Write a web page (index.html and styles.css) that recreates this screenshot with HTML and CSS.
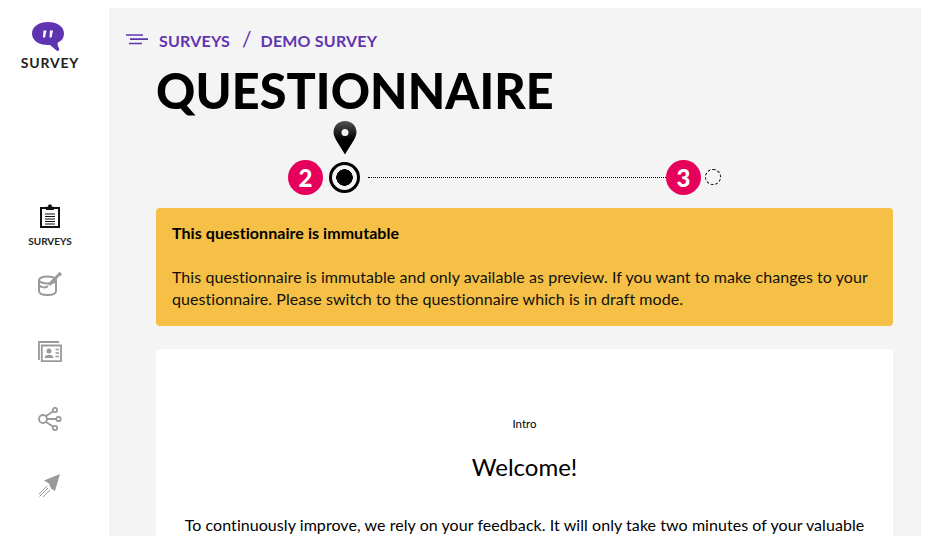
FILE: index.html
```html
<!DOCTYPE html>
<html lang="en">
  <head>
    <meta charset="UTF-8" />
    <title>Questionnaire</title>
    <link rel="stylesheet" href="styles.css">
  </head>
  <body>
    <div class="layout">
      <aside class="sidebar">
        <div class="logo">
          <svg class="logo-icon" width="33" height="30" viewBox="0 0 33 30">
            <path fill="#5f34b0" d="M16 0C25 0 32 4.500 32 11.500C32 16 29.500 19 26 20.500C25 21.500 26 24.500 27 26.500C27.800 28.500 26 29.500 24.500 28.500L18 23C8 23.800 0 19 0 11.500C0 4.500 7 0 16 0Z" />
            <path fill="#fff" d="M11.500 8.500H14.500L13 15.500H11ZM18 8.500H21L19.500 15.500H17.500Z" />
          </svg>
          <div class="logo-text">SURVEY</div>
        </div>

        <nav class="nav">
          <a class="nav-item active">
            <svg width="24" height="24" viewBox="0 0 24 24" fill="none" stroke="#111">
              <path stroke-width="2" d="M8 4H3V23H21V4H16" />
              <path fill="#111" stroke="none" d="M8 6V2.700H10C10.300 -.5 13.700 -.5 14 2.700H16V6Z" />
              <path stroke-width="1.100" d="M7 10H17M7 12.500H17M7 15H17M7 17.500H17M7 20H17" />
            </svg>
            <span>SURVEYS</span>
          </a>
          <a class="nav-item">
            <svg width="24" height="24" viewBox="0 0 24 24" fill="none" stroke="#9a9a9a" stroke-width="2">
              <ellipse cx="9.500" cy="8" rx="8.500" ry="3.500" />
              <path d="M1 8V19C1 22 4 23 9.500 23C15 23 18 22 18 19V8" />
              <path d="M1 13C3 16 8 16 10 14" />
              <path stroke-width="3" d="M11 13L20 3.500" />
              <circle cx="21.500" cy="2.300" r="2" fill="#9a9a9a" stroke="none" />
            </svg>
          </a>
          <a class="nav-item">
            <svg width="24" height="24" viewBox="0 0 24 24" fill="none" stroke="#9a9a9a" stroke-width="1.800">
              <path d="M21 3H1V21" />
              <path d="M3.800 6.500H23V22.200H3.800Z" />
              <circle cx="11" cy="12" r="2.500" fill="#9a9a9a" stroke="none" />
              <path fill="#9a9a9a" stroke="none" d="M6.500 19C6.500 14.500 15.500 14.500 15.500 19Z" />
              <path stroke-width="1.500" d="M17.500 10.500H21M17.500 14H21M17.500 17.500H21" />
            </svg>
          </a>
          <a class="nav-item">
            <svg width="24" height="24" viewBox="0 0 24 24" fill="none" stroke="#9a9a9a" stroke-width="1.800">
              <circle cx="5" cy="12" r="4" />
              <circle cx="17" cy="3" r="2.200" />
              <circle cx="20.500" cy="12" r="2.200" />
              <circle cx="17" cy="21" r="2.200" />
              <path d="M8 9L15 4.500M9 12H18M8 15L15 19.500" />
            </svg>
          </a>
          <a class="nav-item">
            <svg width="24" height="24" viewBox="0 0 24 24" fill="#9a9a9a" stroke="none">
              <path d="M22 0L6 6.500L11 9.500L13 14.500L17 17Z" />
              <path fill="none" stroke="#9a9a9a" d="M9 12L1 20M10 14L1.500 22.500M12 16L5 23" />
            </svg>
          </a>
        </nav>
      </aside>

      <main class="main">
        <div class="breadcrumb">
          <svg class="menu-icon" width="23" height="13" viewBox="0 0 23 13" stroke="#5f34b0" stroke-width="1.700">
            <path d="M0 2H17M4 6.200H22M3 10.500H16" />
          </svg>
          <a class="crumb">SURVEYS</a>
          <span class="crumb-sep">/</span>
          <a class="crumb">DEMO SURVEY</a>
        </div>

        <div class="content">
          <h1>QUESTIONNAIRE</h1>

          <div class="steps">
            <span class="step-badge">2</span>
            <span class="step-current">
              <svg class="pin" width="24" height="34" viewBox="0 0 24 34">
                <defs>
                  <linearGradient id="pin-fill" x1="0" y1="0" x2="0" y2="1">
                    <stop offset="0" stop-color="#555" />
                    <stop offset=".55" stop-color="#000" />
                  </linearGradient>
                </defs>
                <path fill="url(#pin-fill)" fill-rule="evenodd" d="M12 0C19 0 23.500 5 23.500 11.500C23.500 17 16 26 12 33.500C8 26 .5 17 .5 11.500C.5 5 5 0 12 0ZM12 8A3.500 3.500 0 1 0 12 15A3.500 3.500 0 1 0 12 8Z" />
              </svg>
            </span>
            <span class="step-line"></span>
            <span class="step-badge">3</span>
            <span class="step-next"></span>
          </div>

          <div class="alert">
            <p class="alert-title">This questionnaire is immutable</p>
            <p class="alert-text">This questionnaire is immutable and only available as preview. If you want to make changes to your questionnaire. Please switch to the questionnaire which is in draft mode.</p>
          </div>

          <div class="card">
            <div class="card-label">Intro</div>
            <h2>Welcome!</h2>
            <p class="card-text">To continuously improve, we rely on your feedback. It will only take two minutes of your valuable</p>
          </div>
        </div>
      </main>
    </div>
  </body>
</html>
```

FILE: styles.css
```css
html,
body {
  height: 100%;
}

body {
  margin: 0;
  background-color: #fff;
  color: #000;
  font-family: "Lato", "Noto Sans", sans-serif;
  overflow: hidden;
}

p,
h1,
h2 {
  margin: 0;
}

.layout {
  display: flex;
  height: 536px;
  padding-right: 8px;
  box-sizing: border-box;
}

.sidebar {
  width: 109px;
  flex-shrink: 0;
  box-sizing: border-box;
  padding-right: 9px;
  display: flex;
  flex-direction: column;
  align-items: center;
}

.logo {
  margin-top: 22px;
  display: flex;
  flex-direction: column;
  align-items: center;
}

.logo-icon {
  margin-left: -3px;
  display: block;
}

.logo-text {
  margin-top: 2px;
  font-size: 14px;
  line-height: 17px;
  font-weight: 700;
  letter-spacing: 0.8px;
  color: #222;
}

.nav {
  margin-top: 133px;
  display: flex;
  flex-direction: column;
  align-items: center;
}

.nav-item {
  height: 67.5px;
  display: flex;
  flex-direction: column;
  align-items: center;
}

.nav-item span {
  margin-top: 7px;
  font-size: 10px;
  line-height: 12px;
  font-weight: 700;
  color: #222;
}

.main {
  flex: 1;
  margin-top: 8px;
  padding: 0 28px 0 17px;
  background-color: #f4f4f4;
  overflow: hidden;
}

.breadcrumb {
  margin-top: 23px;
  height: 18px;
  display: flex;
  align-items: center;
  color: #5f34b0;
}

.menu-icon {
  margin-right: 10px;
  margin-top: -2px;
}

.crumb {
  font-size: 16px;
  font-weight: 700;
  letter-spacing: 0.2px;
}

.crumb-sep {
  margin: -4px 9px 0 12px;
  font-size: 21px;
}

.content {
  padding-left: 30px;
}

h1 {
  margin-top: 12px;
  font-size: 48.5px;
  line-height: 58px;
  font-weight: 900;
  letter-spacing: 0.1px;
}

.steps {
  margin-top: 40px;
  padding-left: 132px;
  height: 36px;
  display: flex;
  align-items: center;
}

.step-badge {
  width: 35px;
  height: 35px;
  flex-shrink: 0;
  border-radius: 50%;
  background-color: #e6005c;
  color: #fff;
  font-size: 24px;
  font-weight: 900;
  line-height: 35px;
  text-align: center;
}

.step-current {
  position: relative;
  width: 31px;
  height: 31px;
  margin-left: 6px;
  flex-shrink: 0;
  box-sizing: border-box;
  border: 3px solid #000;
  border-radius: 50%;
  background: radial-gradient(circle, #000 0, #000 8px, transparent 8.500px);
}

.pin {
  position: absolute;
  left: 1px;
  top: -44px;
}

.step-line {
  width: 298px;
  margin-left: 8px;
  border-top: 1px dotted #000;
}

.step-next {
  width: 16px;
  height: 16px;
  margin-left: 4px;
  box-sizing: border-box;
  border: 1px dashed #000;
  border-radius: 50%;
}

.alert {
  margin-top: 13px;
  height: 118px;
  box-sizing: border-box;
  padding: 14px 16px 0;
  border-radius: 4px;
  background-color: #f5c045;
  font-size: 16px;
  line-height: 22px;
  letter-spacing: 0.06px;
}

.alert-title {
  font-weight: 700;
}

.alert-text {
  margin-top: 22px;
  color: #111;
}

.card {
  margin-top: 23px;
  height: 300px;
  box-sizing: border-box;
  padding: 66px 28px 0;
  border-radius: 4px;
  background-color: #fff;
  text-align: center;
}

.card-label {
  font-size: 11.5px;
  line-height: 18px;
}

h2 {
  margin-top: 19px;
  font-size: 24px;
  line-height: 30px;
  font-weight: 400;
}

.card-text {
  margin-top: 30px;
  font-size: 16px;
  line-height: 25px;
  letter-spacing: 0.06px;
}
```
